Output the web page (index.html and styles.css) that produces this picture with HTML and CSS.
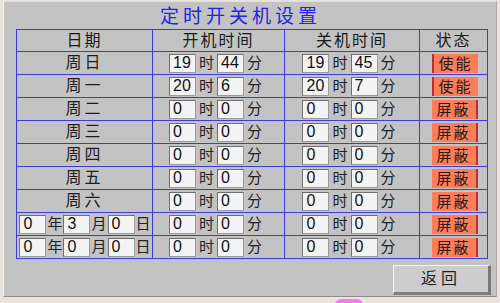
FILE: index.html
```html
<!DOCTYPE html>
<html lang="zh-CN">
<head>
    <meta charset="UTF-8">
    <title>定时开关机设置</title>
    <link rel="stylesheet" href="styles.css">
</head>
<body>
    <div class="panel">
        <h1 class="title">定时开关机设置</h1>

        <table class="timer-table">
            <colgroup>
                <col class="col-date">
                <col class="col-on">
                <col class="col-off">
                <col class="col-state">
            </colgroup>
            <tr class="head">
                <th>日期</th>
                <th>开机时间</th>
                <th>关机时间</th>
                <th>状态</th>
            </tr>
            <tr>
                <td class="day">周日</td>
                <td><div class="time"><input class="num" value="19"><span>时</span><input class="num" value="44"><span>分</span></div></td>
                <td><div class="time"><input class="num" value="19"><span>时</span><input class="num" value="45"><span>分</span></div></td>
                <td><button class="state on">使能</button></td>
            </tr>
            <tr>
                <td class="day">周一</td>
                <td><div class="time"><input class="num" value="20"><span>时</span><input class="num" value="6"><span>分</span></div></td>
                <td><div class="time"><input class="num" value="20"><span>时</span><input class="num" value="7"><span>分</span></div></td>
                <td><button class="state on">使能</button></td>
            </tr>
            <tr>
                <td class="day">周二</td>
                <td><div class="time"><input class="num" value="0"><span>时</span><input class="num" value="0"><span>分</span></div></td>
                <td><div class="time"><input class="num" value="0"><span>时</span><input class="num" value="0"><span>分</span></div></td>
                <td><button class="state off">屏蔽</button></td>
            </tr>
            <tr>
                <td class="day">周三</td>
                <td><div class="time"><input class="num" value="0"><span>时</span><input class="num" value="0"><span>分</span></div></td>
                <td><div class="time"><input class="num" value="0"><span>时</span><input class="num" value="0"><span>分</span></div></td>
                <td><button class="state off">屏蔽</button></td>
            </tr>
            <tr>
                <td class="day">周四</td>
                <td><div class="time"><input class="num" value="0"><span>时</span><input class="num" value="0"><span>分</span></div></td>
                <td><div class="time"><input class="num" value="0"><span>时</span><input class="num" value="0"><span>分</span></div></td>
                <td><button class="state off">屏蔽</button></td>
            </tr>
            <tr>
                <td class="day">周五</td>
                <td><div class="time"><input class="num" value="0"><span>时</span><input class="num" value="0"><span>分</span></div></td>
                <td><div class="time"><input class="num" value="0"><span>时</span><input class="num" value="0"><span>分</span></div></td>
                <td><button class="state off">屏蔽</button></td>
            </tr>
            <tr>
                <td class="day">周六</td>
                <td><div class="time"><input class="num" value="0"><span>时</span><input class="num" value="0"><span>分</span></div></td>
                <td><div class="time"><input class="num" value="0"><span>时</span><input class="num" value="0"><span>分</span></div></td>
                <td><button class="state off">屏蔽</button></td>
            </tr>
            <tr>
                <td><div class="date"><input class="num" value="0"><span>年</span><input class="num" value="3"><span>月</span><input class="num" value="0"><span>日</span></div></td>
                <td><div class="time"><input class="num" value="0"><span>时</span><input class="num" value="0"><span>分</span></div></td>
                <td><div class="time"><input class="num" value="0"><span>时</span><input class="num" value="0"><span>分</span></div></td>
                <td><button class="state off">屏蔽</button></td>
            </tr>
            <tr>
                <td><div class="date"><input class="num" value="0"><span>年</span><input class="num" value="0"><span>月</span><input class="num" value="0"><span>日</span></div></td>
                <td><div class="time"><input class="num" value="0"><span>时</span><input class="num" value="0"><span>分</span></div></td>
                <td><div class="time"><input class="num" value="0"><span>时</span><input class="num" value="0"><span>分</span></div></td>
                <td><button class="state off">屏蔽</button></td>
            </tr>
        </table>

        <div class="actions">
            <button class="back-button">返回</button>
        </div>
    </div>
    <div class="below">
        <span class="pink-spot"></span>
    </div>
</body>
</html>
```

FILE: styles.css
```css
* {
    margin: 0;
    padding: 0;
    box-sizing: border-box;
    font-family: "Liberation Sans", "Noto Sans CJK SC", sans-serif;
}

body {
    background-color: #e9e5de;
    color: #1e1e1e;
    width: 500px;
    height: 303px;
    overflow: hidden;
}

.panel {
    width: 494px;
    height: 296px;
    margin: 1px 3px 0 3px;
    background-color: #c3c3c3;
    border-top: 1px solid #dedede;
    border-left: 1px solid #f2f2f2;
    border-right: 1px solid #a8a8a8;
    border-bottom: 1px solid #8c8c8c;
    padding: 4px 9px 0 12px;
}

.title {
    height: 22px;
    line-height: 22px;
    font-size: 19px;
    font-weight: normal;
    letter-spacing: 4px;
    color: #2424e6;
    text-align: center;
    padding-right: 22px;
    margin-bottom: 1px;
}

.timer-table {
    width: 471px;
    border-collapse: collapse;
    table-layout: fixed;
}

.col-date { width: 136px; }
.col-on { width: 132px; }
.col-off { width: 135px; }
.col-state { width: 68px; }

.timer-table th,
.timer-table td {
    border: 1px solid #3c3cd8;
    text-align: center;
    vertical-align: middle;
    height: 23px;
    padding: 0;
    font-weight: normal;
    font-size: 16px;
    line-height: 18px;
}

.timer-table th {
    height: 22px;
    letter-spacing: 2px;
    color: #1a1a1a;
}

.day {
    letter-spacing: 3px;
}

.time,
.date {
    display: flex;
    justify-content: center;
    align-items: center;
    gap: 3px;
    font-size: 15px;
    line-height: 18px;
    color: #222;
}

.time {
    padding-right: 6px;
}

.date {
    gap: 1px;
    padding-left: 1px;
}

.num {
    width: 27px;
    height: 19px;
    border: 1px solid #707070;
    border-right-color: #9a9a9a;
    border-bottom-color: #9a9a9a;
    background-color: #f4f4f4;
    font-size: 16px;
    line-height: 17px;
    padding: 0 3px;
    color: #111;
    outline: none;
}

.state {
    display: block;
    width: 46px;
    height: 19px;
    margin: 0 auto;
    border: none;
    background-color: #fb7d5c;
    color: #2a1a14;
    font-size: 15px;
    letter-spacing: 2px;
    line-height: 19px;
    position: relative;
    left: 1px;
}

.state.on {
    border-left: 2px solid #b8322a;
}

.state.off {
    border-right: 2px solid #b8322a;
}

.actions {
    display: flex;
    justify-content: flex-end;
    margin-top: 6px;
}

.back-button {
    width: 98px;
    height: 30px;
    background-color: #cdcdcd;
    border-top: 1px solid #f4f4f4;
    border-left: 1px solid #f4f4f4;
    border-right: 3px solid #777;
    border-bottom: 3px solid #808080;
    font-size: 16px;
    line-height: 24px;
    letter-spacing: 4px;
    color: #1e1e1e;
    margin-right: -4px;
}

.below {
    height: 6px;
    padding-left: 335px;
}

.pink-spot {
    display: block;
    width: 28px;
    height: 6px;
    border-radius: 14px 14px 0 0;
    background-color: #f07cf0;
    margin-top: 2px;
}
```
